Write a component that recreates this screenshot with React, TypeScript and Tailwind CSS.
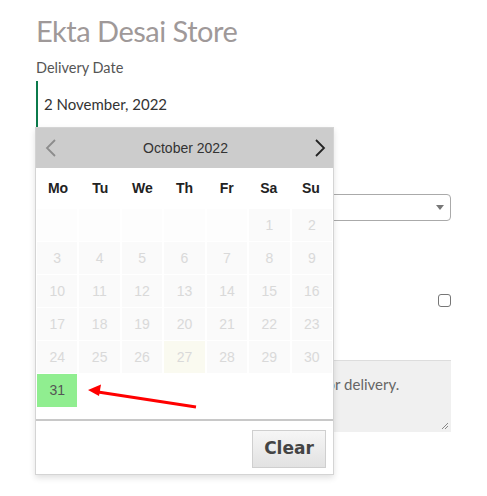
const weeks: (number | null)[][] = [
  [null, null, null, null, null, 1, 2],
  [3, 4, 5, 6, 7, 8, 9],
  [10, 11, 12, 13, 14, 15, 16],
  [17, 18, 19, 20, 21, 22, 23],
  [24, 25, 26, 27, 28, 29, 30],
];

const dayNames = ["Mo", "Tu", "We", "Th", "Fr", "Sa", "Su"];

function Chevron({ dir, color }: { dir: "left" | "right"; color: string }) {
  return (
    <svg width="12" height="18" viewBox="0 0 12 18">
      <polyline
        points={dir === "left" ? "10,1 2,9 10,17" : "2,1 10,9 2,17"}
        fill="none"
        stroke={color}
        strokeWidth="1.8"
      />
    </svg>
  );
}

function Calendar() {
  return (
    <div className="absolute left-[-1px] top-[46px] z-10 w-[299px] border border-[#d4d4d4] bg-white shadow-[0_3px_6px_rgba(0,0,0,0.12)] font-['Liberation_Sans',Arial,sans-serif]">
      <div className="flex h-[40px] items-center justify-between bg-[#cccccc] pl-[9px] pr-[7px]">
        <Chevron dir="left" color="#8c8c8c" />
        <span className="text-[14px] text-[#333]">October 2022</span>
        <Chevron dir="right" color="#222" />
      </div>
      <div className="px-[1px]">
        <div className="grid h-[41px] grid-cols-7 items-center text-center text-[14px] font-bold text-[#222]">
          {dayNames.map((d) => (
            <span key={d}>{d}</span>
          ))}
        </div>
        <div className="grid grid-cols-7 gap-x-[2px] gap-y-px">
          {weeks.flat().map((n, i) =>
            n === null ? (
              <div key={i} className="h-[32px] bg-[#fdfdfd]" />
            ) : (
              <div
                key={i}
                className={`flex h-[32px] items-center justify-center text-[14px] text-[#d9d9d9] ${
                  n === 27 ? "bg-[#fafaf0]" : "bg-[#fafafa]"
                }`}
              >
                {n}
              </div>
            )
          )}
          <div className="flex h-[33px] items-center justify-center bg-[#90ee90] text-[14px] text-[#555]">
            31
          </div>
        </div>
      </div>
      <div className="mt-[12px] flex justify-end border-t-2 border-[#c8c8c8] px-[7px] pt-[9px] pb-[6px]">
        <button className="h-[38px] w-[74px] border border-[#cfcfcf] bg-gradient-to-b from-[#f6f6f6] to-[#e2e2e2] font-['DejaVu_Sans',Verdana,sans-serif] text-[17px] font-bold text-[#444]">
          Clear
        </button>
      </div>
    </div>
  );
}

export default function App() {
  return (
    <div className="relative min-h-[496px] w-[487px] bg-white font-['Lato','Open_Sans',sans-serif]">
      <div className="w-[451px] pl-[36px] pt-[12px]">
        <h1 className="text-[29px] leading-[38px] tracking-[-0.5px] text-[#9f9999]">Ekta Desai Store</h1>
        <label className="mt-[8px] block text-[14.5px] leading-[20px] text-[#555]">Delivery Date</label>
        <div className="relative mt-[3px]">
          <div className="flex h-[46px] items-center border-l-2 border-[#0b7a4b] pl-[6px] text-[15px] text-[#333]">
            2 November, 2022
          </div>
          <Calendar />
        </div>
        <div className="mt-[67px] flex h-[27px] items-center justify-end rounded-[4px] border border-[#aaa] pr-[6px]">
          <svg width="8" height="5" viewBox="0 0 8 5">
            <path d="M0 0h8L4 5z" fill="#777" />
          </svg>
        </div>
        <div className="mt-[73px] flex justify-end">
          <span className="block h-[13px] w-[13px] rounded-[3px] border border-[#767676]" />
        </div>
        <div className="relative mt-[53px] h-[72px] w-full border-t border-[#ddd] bg-[#f0f0f0] pl-[30px] pr-[10px] pt-[12px] text-[15px] text-[#666]">
          Add any special notes and instructions for delivery.
          <svg className="absolute bottom-[2px] right-[2px]" width="8" height="8" viewBox="0 0 8 8">
            <path d="M7 1L1 7M7 4L4 7" stroke="#888" strokeWidth="1" />
          </svg>
        </div>
      </div>
      <svg className="pointer-events-none absolute left-0 top-0 z-20" width="487" height="496">
        <line x1="196" y1="407" x2="98" y2="392" stroke="#f00" strokeWidth="3" />
        <path d="M88 390L101 384.5L99 396z" fill="#f00" />
      </svg>
    </div>
  );
}
